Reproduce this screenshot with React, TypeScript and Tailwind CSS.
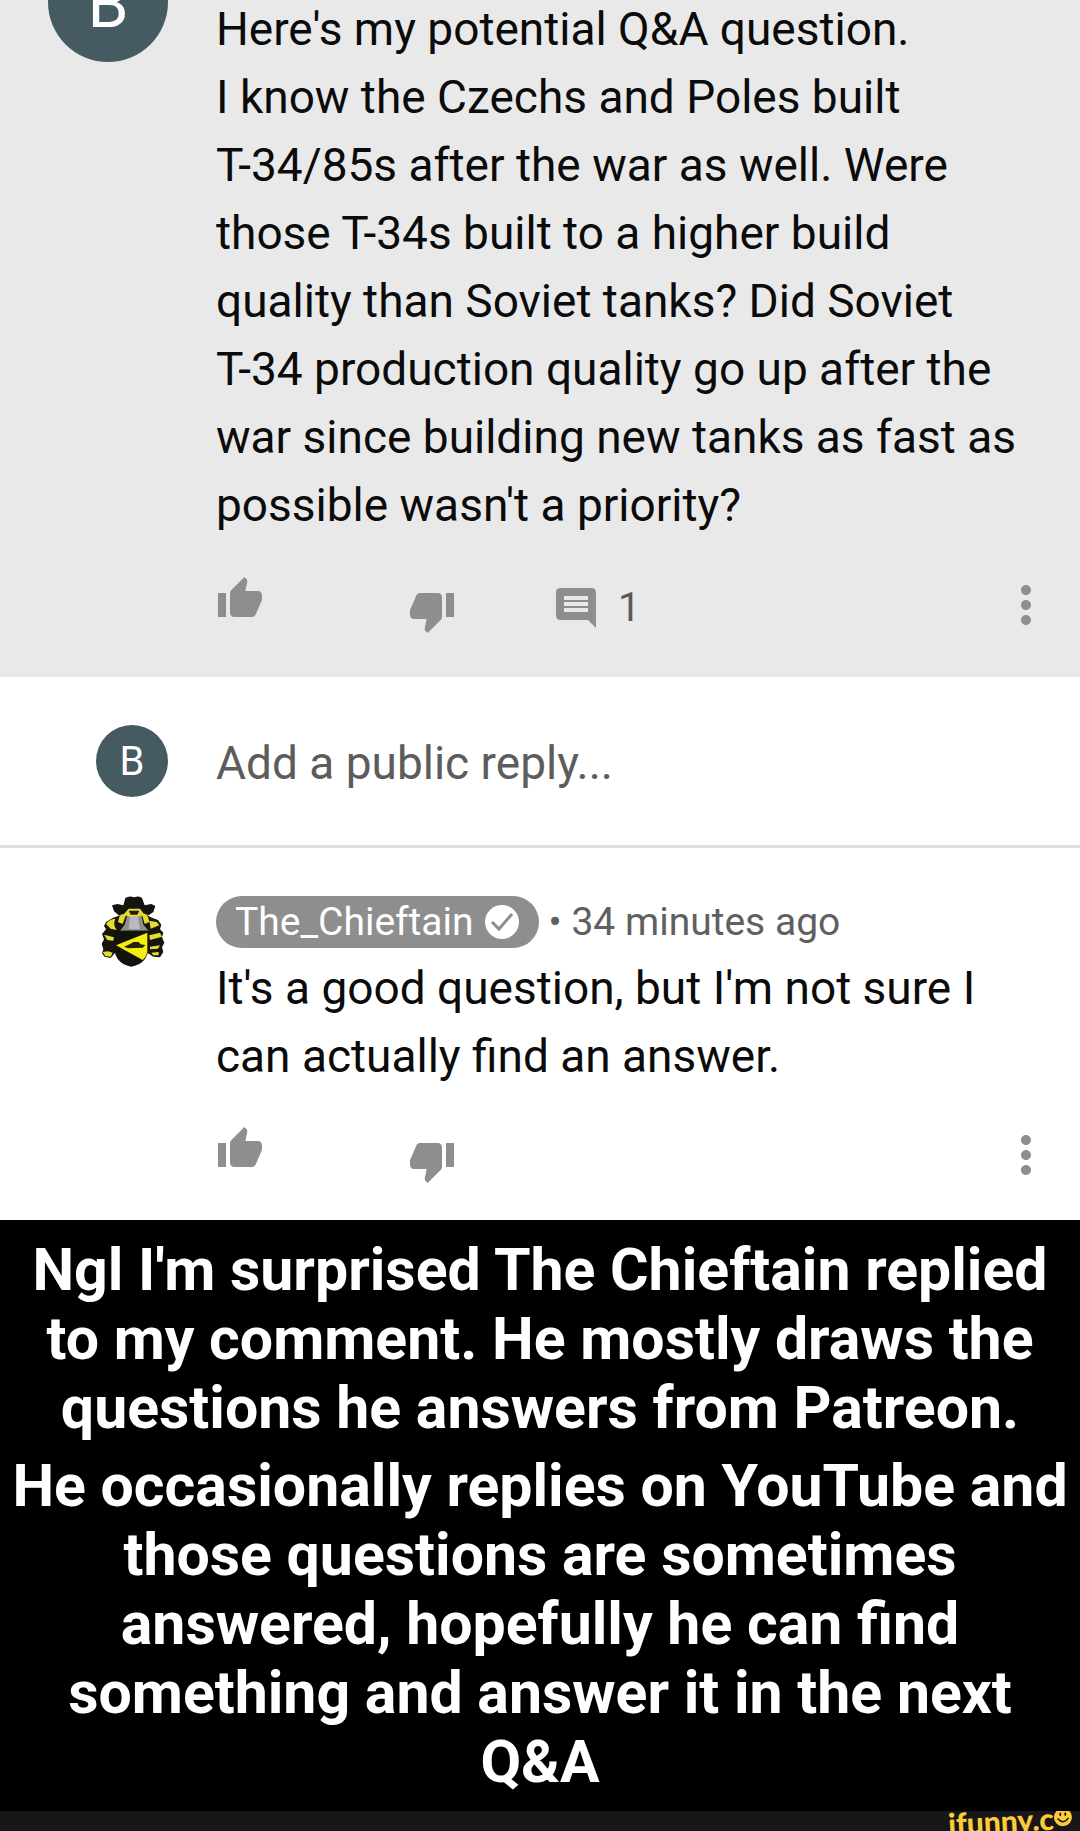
import React from 'react';
import { MdComment, MdMoreVert, MdThumbDown, MdThumbUp } from 'react-icons/md';

interface CommentActionsProps {
    replies?: number;
}

const QUESTION_LINES = [
    "Here's my potential Q&A question.",
    'I know the Czechs and Poles built',
    'T-34/85s after the war as well. Were',
    'those T-34s built to a higher build',
    'quality than Soviet tanks? Did Soviet',
    'T-34 production quality go up after the',
    'war since building new tanks as fast as',
    "possible wasn't a priority?",
];

const ANSWER_LINES = [
    "It's a good question, but I'm not sure I",
    'can actually find an answer.',
];

const CAPTION = [
    [
        "Ngl I'm surprised The Chieftain replied",
        'to my comment. He mostly draws the',
        'questions he answers from Patreon.',
    ],
    [
        'He occasionally replies on YouTube and',
        'those questions are sometimes',
        'answered, hopefully he can find',
        'something and answer it in the next',
        'Q&A',
    ],
];

const Lines: React.FC<{ lines: string[] }> = ({ lines }) => (
    <>
        {lines.map((line) => (
            <span key={line} className="block whitespace-nowrap">{line}</span>
        ))}
    </>
);

const CommentActions: React.FC<CommentActionsProps> = ({ replies }) => (
    <div className="flex h-15 items-center text-[#8e8e8e]">
        <button aria-label="Like" className="self-start"><MdThumbUp className="size-12" /></button>
        <button aria-label="Dislike" className="ml-36 self-end"><MdThumbDown className="size-12" /></button>
        {replies !== undefined && (
            <button aria-label="Replies" className="ml-24 flex items-center gap-[18px] pt-[6px]">
                <MdComment className="size-12" />
                <span className="text-[40px] leading-12 text-[#5a5a5a]">{replies}</span>
            </button>
        )}
        <button aria-label="More" className="ml-auto"><MdMoreVert className="size-15" /></button>
    </div>
);

const Crest = () => (
    <svg viewBox="15 18 192 216" className="h-18 w-16">
        {/* mantling */}
        <path d="M72 76 50 84 30 96 24 108 30 118 18 132 24 148 17 162 22 178 18 190 26 200 44 204 56 190H156L172 200 192 202 202 186 198 172 205 158 198 142 202 128 192 118 196 104 186 90 164 82 148 72Z" fill="#17160e" />
        <path d="M58 86Q38 88 30 102L44 116 62 120Q50 104 58 86ZM24 134 34 150 52 152 54 142ZM20 186 28 198 44 200 50 188 36 184ZM94 54 70 80 66 96 80 102 88 80 98 68ZM132 54 156 80 160 96 146 102 140 80 128 68ZM160 92 182 96 190 106 164 116ZM160 136 192 128 198 140 162 150ZM162 170 192 166 186 176 162 178ZM166 188 188 186 188 196 172 196Z" fill="#e4dc30" />
        {/* helmet */}
        <path d="M94 74H136L142 104 158 122H72L86 104Z" fill="#8f8f92" />
        <path d="M102 80h24l6 38H98Z" fill="#b9b9bd" />
        <path d="M92 58Q114 48 136 58L138 76 126 80H102L88 76Z" fill="#e4dc30" />
        <path d="M98 62h32l-6 12h-20Z" fill="#1c1b16" />
        {/* hat */}
        <path d="M48 46 64 42 82 46 88 24Q100 16 114 22 130 16 138 24L146 46 166 42 178 48 172 66 158 76 142 70 132 56H98L84 72 68 76 54 64Z" fill="#15140f" />
        {/* shield */}
        <path d="M55 122H157V178Q152 222 106 230 60 222 55 178Z" fill="#12120e" />
        <path d="M154 128V186Q150 202 140 210L60 166Z" fill="#f4ee0d" />
        <path d="M84 170 102 162 112 156H128L134 163 148 165 140 173 96 175Z" fill="#25240c" />
    </svg>
);

const Smiley = () => (
    <svg viewBox="0 0 18 18" className="size-[18px]">
        <circle cx="9" cy="9" r="9" fill="#fdcb35" />
        <ellipse cx="6.500" cy="6" rx="1" ry="1.800" fill="#171719" />
        <ellipse cx="11.500" cy="6" rx="1" ry="1.800" fill="#171719" />
        <path d="M3.500 10Q9 17 14.500 10" fill="none" stroke="#171719" strokeWidth="1.400" />
    </svg>
);

export default function App() {
    return (
        <main className="w-full overflow-hidden bg-white font-[Roboto,sans-serif] text-[#0b0b0b]">
            <section className="flex bg-[#e9e9e9] pr-6 pb-[42px] pl-12">
                <div className="-mt-[58px] flex size-30 shrink-0 items-center justify-center rounded-full bg-[#455a61] pt-1 text-[66px] text-white">B</div>
                <div className="ml-12 flex-1">
                    <p className="-mt-[5px] text-[46px] leading-[68px]"><Lines lines={QUESTION_LINES} /></p>
                    <div className="mt-[36px]"><CommentActions replies={1} /></div>
                </div>
            </section>

            <section className="flex h-[171px] items-center border-b-3 border-[#dfdfdf] pl-24">
                <div className="flex size-18 shrink-0 items-center justify-center rounded-full bg-[#455a61] pt-[2px] text-[40px] text-white">B</div>
                <input aria-label="Add a public reply" placeholder="Add a public reply..." className="ml-12 min-w-0 flex-1 pt-[3px] text-[46px] leading-[68px] outline-none placeholder:text-[#5c5c5c]" />
            </section>

            <section className="flex pt-12 pr-6 pb-[35px] pl-[101px]">
                <Crest />
                <div className="ml-[51px] flex-1">
                    <div className="flex items-center text-[39px] leading-[52px] text-[#606060]">
                        <a href="#" className="flex items-center gap-[11px] rounded-full bg-[#8e8e8e] pr-5 pl-[19px] text-white">
                            The_Chieftain
                            <svg viewBox="0 0 34 34" className="size-[34px]">
                                <circle cx="17" cy="17" r="17" fill="#fff" />
                                <path d="m7 17 7 7L27 9" fill="none" stroke="#8e8e8e" strokeWidth="3" />
                            </svg>
                        </a>
                        <span className="ml-[10px] whitespace-nowrap">• 34 minutes ago</span>
                    </div>
                    <p className="mt-[6px] text-[46px] leading-[68px]"><Lines lines={ANSWER_LINES} /></p>
                    <div className="mt-[35px]"><CommentActions /></div>
                </div>
            </section>

            <section className="bg-black pt-[15px] pb-[15px] text-center text-[59px] leading-[69px] font-bold text-white">
                {CAPTION.map((lines, i) => (
                    <p key={i} className="mb-[9px] flex flex-col items-center last:mb-0"><Lines lines={lines} /></p>
                ))}
            </section>

            <footer className="flex h-5 items-start justify-end overflow-hidden bg-[#171719] pr-2">
                <div className="flex -rotate-3 items-center font-[Lato,sans-serif] text-[30px] leading-4 font-black text-[#fdcb35]">
                    ifunny.c<Smiley />
                </div>
            </footer>
        </main>
    );
}
